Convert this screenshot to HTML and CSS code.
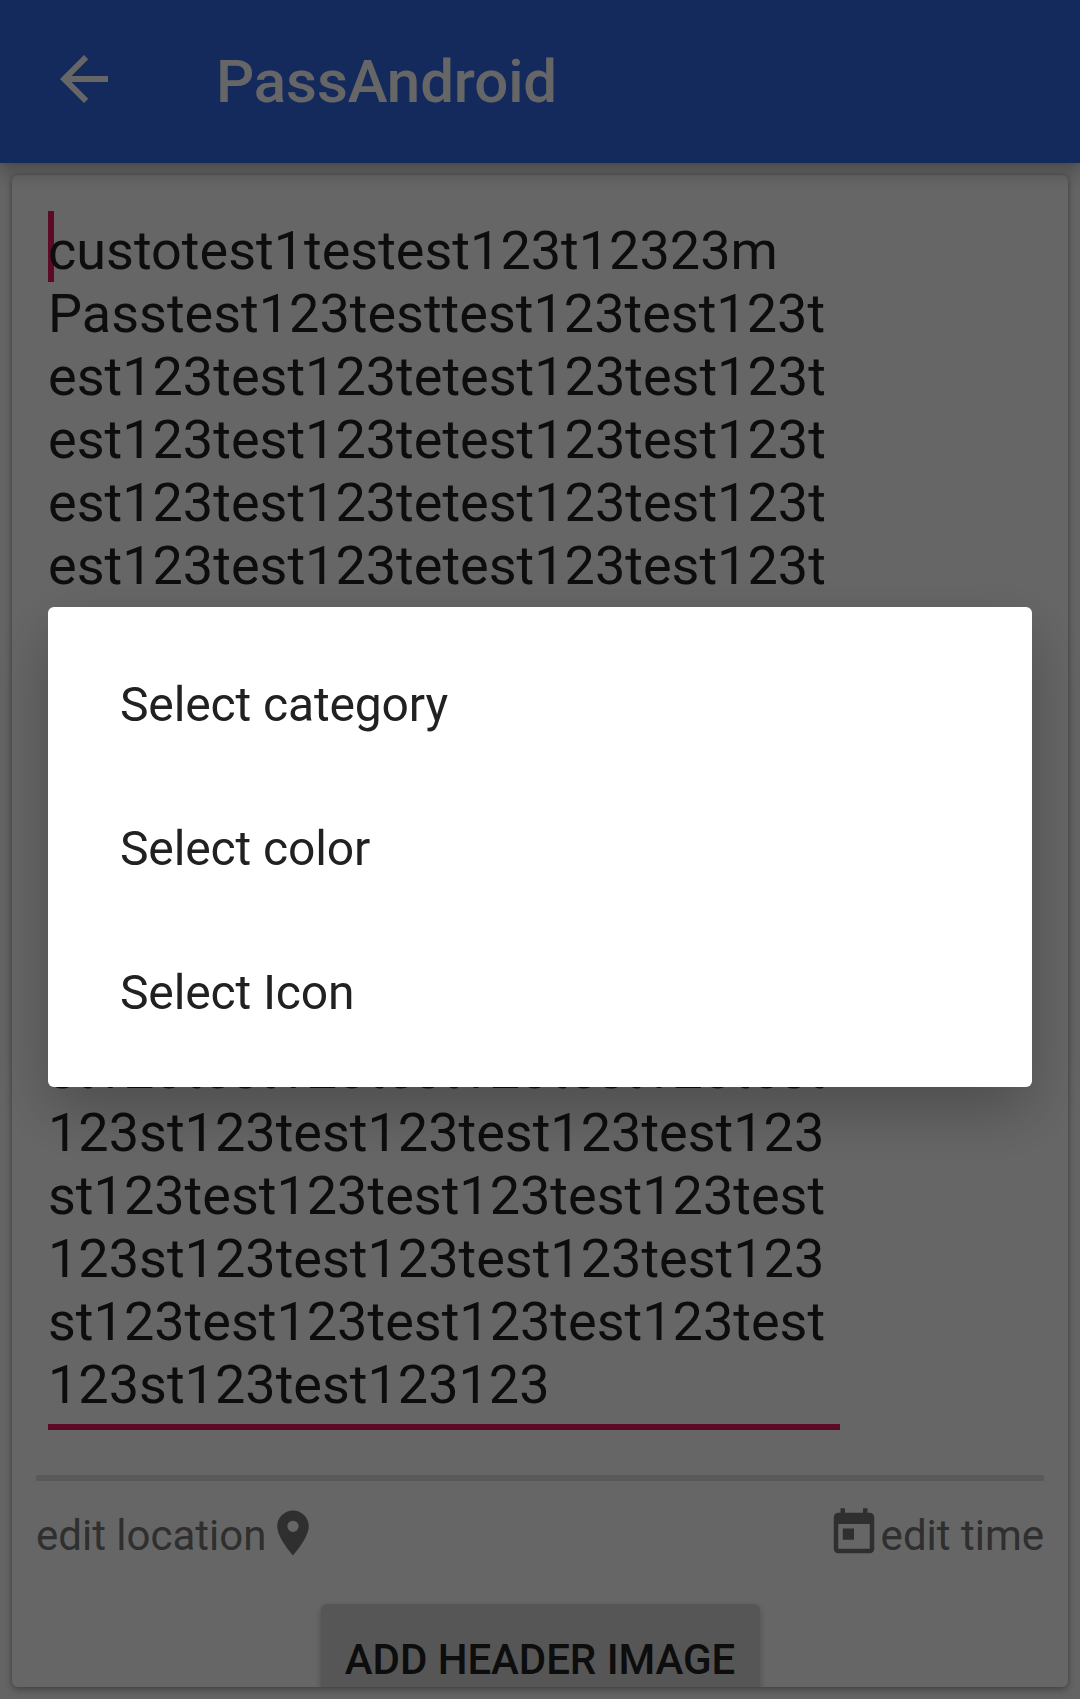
FILE: index.html
```html
<!DOCTYPE html>
<html lang="en">
<head>
<meta charset="utf-8">
<title>PassAndroid</title>
<link rel="stylesheet" href="styles.css">
</head>
<body>
<div class="screen">
  <header class="toolbar">
    <svg class="back" viewBox="0 0 24 24"><path d="M20 11H7.83l5.59-5.59L12 4l-8 8 8 8 1.41-1.41L7.83 13H20v-2z"/></svg>
    <h1 class="title">PassAndroid</h1>
  </header>
  <main class="content">
    <section class="card">
      <div class="card-body">
        <div class="field"><span class="cursor"></span>custotest1testest123t12323m
Passtest123testtest123test123t
est123test123tetest123test123t
est123test123tetest123test123t
est123test123tetest123test123t
est123test123tetest123test123t
est123test123tetest123test123t
est123test123tetest123test123t
est123test123tetest123test123t
st123test123test123test123test
123st123test123test123test123
st123test123test123test123test
123st123test123test123test123
st123test123test123test123test
123st123test123test123test123
st123test123test123test123test
123st123test123test123test123
st123test123test123test123test
123st123test123123</div>
        <div class="divider"></div>
        <div class="actions">
          <div class="action"><span>edit location</span><svg class="icon" viewBox="0 0 24 24"><path d="M12 2C8.13 2 5 5.13 5 9c0 5.25 7 13 7 13s7-7.75 7-13c0-3.87-3.13-7-7-7zm0 9.5a2.5 2.5 0 0 1 0-5 2.5 2.5 0 0 1 0 5z"/></svg></div>
          <div class="action"><svg class="icon" viewBox="0 0 24 24"><path d="M19 3h-1V1h-2v2H8V1H6v2H5c-1.11 0-1.99.9-1.99 2L3 19c0 1.1.89 2 2 2h14c1.1 0 2-.9 2-2V5c0-1.1-.9-2-2-2zm0 16H5V8h14v11zM7 10h5v5H7z"/></svg><span>edit time</span></div>
        </div>
        <button class="button">ADD HEADER IMAGE</button>
      </div>
    </section>
  </main>
</div>
<div class="scrim">
  <ul class="dialog">
    <li class="option">Select category</li>
    <li class="option">Select color</li>
    <li class="option">Select Icon</li>
  </ul>
</div>
</body>
</html>
```
FILE: styles.css
```css
* { box-sizing: border-box; }
body {
  margin: 0;
  font-family: Roboto, sans-serif;
  overflow: hidden;
}
.screen {
  display: flex;
  flex-direction: column;
  height: 1699px;
  background: #fafafa;
}
.toolbar {
  position: relative;
  z-index: 1;
  flex: none;
  display: flex;
  align-items: flex-end;
  height: 163px;
  padding: 0 48px;
  background: #356ae6;
  box-shadow: 0 12px 15px rgba(0, 0, 0, .2), 0 0 6px rgba(0, 0, 0, .15);
}
.back {
  width: 72px;
  height: 72px;
  margin-bottom: 48px;
  fill: #fff;
}
.title {
  margin: 0 0 46px 96px;
  font-size: 60px;
  line-height: 70px;
  font-weight: 500;
  letter-spacing: -.1px;
  color: #fff;
}
.content {
  flex: 1;
  display: flex;
  min-height: 0;
  padding: 12px;
}
.card {
  flex: 1;
  display: flex;
  border-radius: 6px;
  background: #fff;
  box-shadow: 0 3px 9px rgba(0, 0, 0, .3), 0 0 4px rgba(0, 0, 0, .16);
}
.card-body {
  flex: 1;
  display: flex;
  flex-direction: column;
  overflow: hidden;
  border-radius: 6px;
  padding: 44px 24px 0;
}
.field {
  position: relative;
  z-index: 0;
  flex: none;
  width: 792px;
  height: 1211px;
  margin-left: 12px;
  border-bottom: 6px solid #e81a5a;
  font-size: 54px;
  line-height: 63px;
  white-space: pre;
  color: #212121;
}
.cursor {
  position: absolute;
  z-index: -1;
  left: 0;
  top: -8px;
  width: 6px;
  height: 71px;
  background: #e81a5a;
}
.divider {
  flex: none;
  height: 6px;
  margin-top: 45px;
  background: #dfdfdf;
}
.actions {
  flex: none;
  display: flex;
  justify-content: space-between;
  height: 54px;
  margin-top: 25px;
  color: #757575;
  font-size: 42px;
  line-height: 49px;
}
.action {
  display: flex;
  align-items: flex-start;
}
.action span { margin-top: 5px; }
.icon {
  width: 54px;
  height: 54px;
  fill: #757575;
}
.button {
  flex: none;
  align-self: center;
  width: 439px;
  height: 108px;
  margin-top: 44px;
  padding: 2px 0 0;
  border: 0;
  border-radius: 6px;
  background: #d6d7d7;
  box-shadow: 0 3px 6px rgba(0, 0, 0, .25);
  font: 500 42px/49px Roboto, sans-serif;
  letter-spacing: -.06px;
  color: #212121;
}
.scrim {
  position: fixed;
  inset: 0;
  z-index: 10;
  display: flex;
  justify-content: center;
  align-items: flex-start;
  padding: 607px 48px 0;
  background: rgba(0, 0, 0, .6);
}
.dialog {
  flex: 1;
  margin: 0;
  padding: 24px 0;
  list-style: none;
  border-radius: 6px;
  background: #fff;
  box-shadow: 0 24px 60px rgba(0, 0, 0, .25);
}
.option {
  display: flex;
  align-items: center;
  height: 144px;
  padding: 2px 72px 0;
  font-size: 48px;
  letter-spacing: -.13px;
  color: #212121;
}
```
